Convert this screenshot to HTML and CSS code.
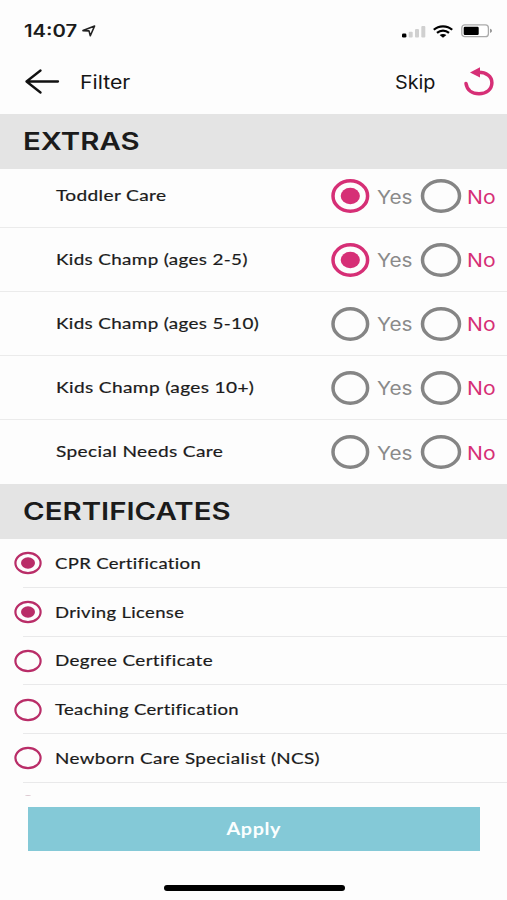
FILE: index.html
```html
<!DOCTYPE html>
<html lang="en">
<head>
<meta charset="utf-8">
<title>Filter</title>
<link rel="stylesheet" href="styles.css">
</head>
<body>
<svg class="defs" width="0" height="0" aria-hidden="true">
  <symbol id="yes" viewBox="0 0 40 36"><ellipse cx="20.300" cy="18" rx="17.300" ry="15.200" fill="none" stroke="currentColor" stroke-width="3.500"/></symbol>
  <symbol id="yes-on" viewBox="0 0 40 36"><ellipse cx="20.300" cy="18" rx="17.300" ry="15.200" fill="none" stroke="currentColor" stroke-width="3.500"/><ellipse cx="20.300" cy="18" rx="9.600" ry="8.300" fill="currentColor"/></symbol>
  <symbol id="no" viewBox="0 0 42 36"><ellipse cx="21" cy="18" rx="18.500" ry="15.200" fill="none" stroke="currentColor" stroke-width="3.500"/></symbol>
  <symbol id="cert" viewBox="0 0 28 24"><ellipse cx="14" cy="12" rx="12.600" ry="10.200" fill="none" stroke="currentColor" stroke-width="2.200"/></symbol>
  <symbol id="cert-on" viewBox="0 0 28 24"><ellipse cx="14" cy="12" rx="12.600" ry="10.200" fill="none" stroke="currentColor" stroke-width="2.200"/><ellipse cx="14" cy="12" rx="7" ry="5.700" fill="currentColor"/></symbol>
</svg>
<div class="status">
  <span class="time">14:07</span>
  <svg class="location" viewBox="0 0 14 12"><path d="M1 5.600 12.600 1 8.300 10.700 7 5.900Z" fill="none" stroke="#222" stroke-width="1.600" stroke-linejoin="round"/></svg>
  <svg class="signal" viewBox="0 0 24 13"><rect x="0" y="8.500" width="4.400" height="4" rx="1.300" fill="#000"/><g fill="#d0d0d0"><rect x="6.700" y="6.700" width="4" height="5.800" rx="1"/><rect x="13" y="4" width="4" height="8.500" rx="1"/><rect x="19.300" y="1" width="4" height="11.500" rx="1"/></g></svg>
  <svg class="wifi" viewBox="0 0 20 13"><g fill="none" stroke="#000" stroke-width="2.200"><path d="M.8 4.800C5.800.1 14.200.1 19.200 4.800"/><path d="M4 7.900c3.500-3 8.500-3 12 0"/></g><path d="M6.600 10c2-1.500 4.800-1.500 6.800 0L10 12.700Z"/></svg>
  <svg class="battery" viewBox="0 0 32 14"><rect x=".8" y=".9" width="26.600" height="11.800" rx="3" fill="#fff" stroke="#aaa" stroke-width="1.300"/><rect x="2.700" y="2.700" width="15" height="8.200" rx="1.200"/><path d="M29 4.800c2.700.7 2.700 3.400 0 4.200Z" fill="#999"/></svg>
</div>
<header class="header">
  <svg class="back" viewBox="0 0 36 26"><path d="M33 12.500H1.500M15.500 1.500 1.500 12.500 15.500 23.500" fill="none" stroke="#111" stroke-width="2.300" stroke-linecap="round" stroke-linejoin="round"/></svg>
  <span class="title">Filter</span>
  <span class="skip">Skip</span>
  <svg class="reset" viewBox="0 0 32 30"><path d="M3 16.500C4 23.300 9.300 26.800 16 26.800c7.500 0 12.900-4.500 12.900-11S23.300 5.300 15.500 5.300H13" fill="none" stroke="#d62f76" stroke-width="3.500" stroke-linecap="round"/><path d="M7 5.500 17 .3V10.500Z" fill="#d62f76"/></svg>
</header>
<h2 class="band"><span>EXTRAS</span></h2>
<ul class="extras-list">
  <li><span class="label wide">Toddler Care</span><svg class="radio-yes on"><use href="#yes-on"/></svg><span class="yes">Yes</span><svg class="radio-no"><use href="#no"/></svg><span class="no">No</span></li>
  <li><span class="label medium">Kids Champ (ages 2-5)</span><svg class="radio-yes on"><use href="#yes-on"/></svg><span class="yes">Yes</span><svg class="radio-no"><use href="#no"/></svg><span class="no">No</span></li>
  <li><span class="label medium">Kids Champ (ages 5-10)</span><svg class="radio-yes"><use href="#yes"/></svg><span class="yes">Yes</span><svg class="radio-no"><use href="#no"/></svg><span class="no">No</span></li>
  <li><span class="label wide">Kids Champ (ages 10+)</span><svg class="radio-yes"><use href="#yes"/></svg><span class="yes">Yes</span><svg class="radio-no"><use href="#no"/></svg><span class="no">No</span></li>
  <li><span class="label wide">Special Needs Care</span><svg class="radio-yes"><use href="#yes"/></svg><span class="yes">Yes</span><svg class="radio-no"><use href="#no"/></svg><span class="no">No</span></li>
</ul>
<h2 class="band"><span>CERTIFICATES</span></h2>
<ul class="cert-list">
  <li><svg class="radio-cert"><use href="#cert-on"/></svg><span class="label">CPR Certification</span></li>
  <li><svg class="radio-cert"><use href="#cert-on"/></svg><span class="label">Driving License</span></li>
  <li><svg class="radio-cert"><use href="#cert"/></svg><span class="label medium">Degree Certificate</span></li>
  <li><svg class="radio-cert"><use href="#cert"/></svg><span class="label">Teaching Certification</span></li>
  <li><svg class="radio-cert"><use href="#cert"/></svg><span class="label medium">Newborn Care Specialist (NCS)</span></li>
</ul>
<div class="peek"></div>
<button class="apply"><span>Apply</span></button>
<div class="home"></div>
</body>
</html>
```
FILE: styles.css
```css
* { box-sizing: border-box; }
body { margin: 0; width: 507px; height: 900px; overflow: hidden; background: #fdfdfd; color: #1b1b1b; font-family: Inter, "Liberation Sans", sans-serif; display: flex; flex-direction: column; }
ul, h2 { margin: 0; padding: 0; list-style: none; }
svg { flex: none; display: block; }
.defs { position: absolute; }
span { display: block; white-space: nowrap; transform-origin: left center; }
.status { height: 62px; padding-left: 24px; display: flex; align-items: center; flex: none; }
.time { width: 58px; font-size: 17px; font-weight: 600; transform: scaleX(1.19); }
.location { width: 14px; height: 12px; }
.signal { width: 24px; height: 13px; margin-left: 306px; }
.wifi { width: 20px; height: 13px; margin-left: 7px; }
.battery { width: 32px; height: 14px; margin-left: 8px; }
.header { height: 52px; padding: 0 0 13px 25px; display: flex; align-items: center; flex: none; }
.back { width: 36px; height: 26px; }
.title { width: 315px; margin-left: 18.5px; font-size: 18.5px; transform: scaleX(1.15); }
.title, .skip { color: #151515; }
.skip { width: 68px; font-size: 18.5px; transform: scaleX(1.07); }
.reset { width: 32px; height: 30px; }
.band { height: 55px; padding: 0 0 1px 22.5px; background: #e4e4e4; display: flex; align-items: center; font-size: 24.5px; font-weight: 600; flex: none; }
.band span { transform: scaleX(1.2); }
.label { margin-bottom: 2px; font-family: Lato, sans-serif; font-size: 15.8px; letter-spacing: .3px; -webkit-text-stroke: .2px #1b1b1b; transform: scaleX(1.17); }
.label.medium { transform: scaleX(1.192); }
.label.wide { transform: scaleX(1.208); }
.extras-list { height: 315px; flex: none; }
.extras-list li { height: 64px; padding-left: 56px; border-bottom: 1px solid #ebebeb; display: flex; align-items: center; }
.extras-list li:first-child { height: 59px; padding-bottom: 4px; }
.extras-list li:last-child { border: 0; }
.extras-list .label { width: 274px; margin-bottom: 3px; }
.radio-yes { width: 40px; height: 36px; color: #858585; }
.radio-yes.on { color: #d62f76; }
.yes, .no { margin-top: 1px; font-size: 18.5px; font-weight: 400; }
.yes { width: 43px; margin-left: 7px; color: #8a8a8a; transform: scaleX(1.12); }
.radio-no { width: 42px; height: 36px; color: #858585; }
.no { margin-left: 5px; color: #d62f76; transform: scaleX(1.14); }
.cert-list { flex: none; }
.cert-list li { height: 48.75px; padding-left: 14px; display: flex; align-items: center; background: linear-gradient(#e9e9ea, #e9e9ea) 23px bottom / 484px 1px no-repeat; }
.radio-cert { width: 28px; height: 24px; color: #b92d68; margin-right: 13px; }
.peek { flex: none; width: 6px; height: 2px; margin: 12px 0 0 25px; border-top: 1px solid #dcc8d0; border-radius: 50%; }
.apply { flex: none; width: 452px; height: 44px; margin: 10px 0 0 28px; padding: 0; border: 0; background: #84c9d7; color: #fbffff; display: flex; align-items: center; justify-content: center; font: 700 16.5px Lato, sans-serif; }
.apply span { transform: scaleX(1.2); transform-origin: center; letter-spacing: .5px; }
.home { flex: none; width: 181px; height: 6px; margin: 34px 0 0 164px; background: #000; border-radius: 3px; }
```
